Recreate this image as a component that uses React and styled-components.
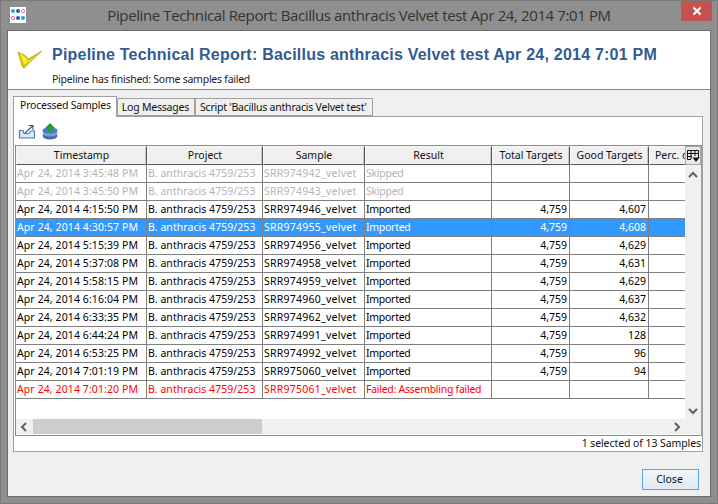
import React from 'react';
import styled, { createGlobalStyle } from 'styled-components';

const Global = createGlobalStyle`
  html, body { margin: 0; padding: 0; background: #8f8f8f; }
  * { box-sizing: border-box; }
`;
const uiFont = `"Noto Sans", "DejaVu Sans", sans-serif`;
const COLS = '131px 116px 102px 127px 78px 79px 88px';

const Window = styled.div`
  width: 718px; height: 504px; background: #8f8f8f; overflow: hidden;
  display: flex; flex-direction: column; font-family: ${uiFont};
  border: 1px solid #7a7a7a;
`;
const TitleBar = styled.div`
  height: 29px; flex: none; display: flex; align-items: flex-start; justify-content: space-between;
  padding-left: 9px;
`;
const AppIcon = styled.svg`width: 16px; height: 16px; margin-top: 6px; flex: none;`;
const TitleText = styled.div`
  flex: 1; text-align: center; font-size: 15px; line-height: 29px; color: #333; white-space: nowrap;
  font-family: "Open Sans", sans-serif; letter-spacing: -0.39px; padding-left: 11px;
`;
const CloseBox = styled.div`
  width: 31px; height: 20px; margin-right: 5px; background: #c75050; flex: none;
  display: flex; align-items: center; justify-content: center;
`;
const Client = styled.div`
  flex: 1; margin: 0 6px 6px 6px; background: #f0f0f0; border: 1px solid #6d6d6d;
  display: flex; flex-direction: column; min-height: 0;
`;
const Banner = styled.div`
  height: 59px; flex: none; background: #fff; border-bottom: 1px solid #8a8a8a;
  display: flex; padding: 0 0 0 9px;
`;
const CheckIcon = styled.svg`width: 26px; height: 24px; margin-top: 18px; flex: none;`;
const BannerText = styled.div`margin-left: 9px; padding-top: 14px;`;
const BannerTitle = styled.div`
  font: bold 16px/20px "Liberation Sans", Arial, sans-serif; color: #335b8f; letter-spacing: 0.22px; white-space: nowrap;
`;
const BannerSub = styled.div`font-size: 10.5px; line-height: 14px; margin-top: 7px; color: #222; white-space: nowrap; letter-spacing: -0.25px;`;
const Body = styled.div`flex: 1; display: flex; flex-direction: column; padding: 6px 7px 0 5px; min-height: 0;`;
const Tabs = styled.div`display: flex; align-items: flex-end; height: 20px; flex: none;`;
const Tab = styled.div`
  font-size: 10.5px; white-space: nowrap; color: #111; letter-spacing: -0.22px;
  border: 1px solid #a0a0a0;
  background: ${p => (p.$active ? '#fff' : '#f0f0f0')};
  height: ${p => (p.$active ? '21px' : '18px')};
  line-height: 17px;
  padding: ${p => (p.$active ? '0 5px 0 6px' : '0 5px 0 4px')};
  border-bottom: ${p => (p.$active ? 'none' : '1px solid #a0a0a0')};
  position: relative; z-index: ${p => (p.$active ? 1 : 0)};
  margin-bottom: ${p => (p.$active ? '-1px' : '0')};
`;
const Panel = styled.div`
  width: 690px; height: 336px; flex: none; border: 1px solid #a0a0a0; background: #fff;
  display: flex; flex-direction: column; padding: 0 0 0 1px;
`;
const Toolbar = styled.div`height: 28px; flex: none; display: flex; align-items: flex-start; gap: 5px; padding: 5px 0 0 3px;`;
const ToolIcon = styled.svg`width: 18px; height: 18px; flex: none;`;
const Frame = styled.div`flex: 1; border-top: 1px solid #8a8a8a; display: flex; flex-direction: column; min-height: 0;`;
const FrameInner = styled.div`
  height: 290px; flex: none; display: flex; flex-direction: column;
  border-left: 1px solid #8a8a8a; border-right: 1px solid #a0a0a0; border-bottom: 1px solid #8a8a8a;
`;
const Main = styled.div`height: 273px; flex: none; display: flex; min-height: 0;`;
const Grid = styled.div`flex: 1; overflow: hidden; min-width: 0; background: #fff;`;
const Row = styled.div`
  display: grid; grid-template-columns: ${COLS}; height: 18px; width: 721px;
  background: ${p => (p.$sel ? '#3399ff' : '#fff')};
  color: ${p => (p.$sel ? '#fff' : p.$tone === 'gray' ? '#b4b4b4' : p.$tone === 'red' ? '#ff0000' : '#000')};
`;
const Cell = styled.div`
  font-size: 10.5px; line-height: 17px; padding: 0 1px; border-right: 1px solid #808080; border-bottom: 1px solid #808080;
  white-space: nowrap; overflow: hidden; text-align: ${p => (p.$num ? 'right' : 'left')};
  padding-right: ${p => (p.$num ? '2px' : '1px')};
  letter-spacing: ${p => p.$track || 0}px;
`;
const HeaderRow = styled.div`
  display: grid; grid-template-columns: ${COLS}; height: 19px; width: 721px;
`;
const HeaderCell = styled.div`
  font-size: 10.5px; line-height: 16px; text-align: center; color: #111; white-space: nowrap; overflow: hidden;
  background: #f0f0f0; border: 1px solid #f8f8f8; border-right: 1px solid #555; border-bottom: 1px solid #555;
  box-shadow: inset -1px 0 0 #c8c8c8;
`;
const VBar = styled.div`
  width: 16px; flex: none; background: #f0f0f0; display: flex; flex-direction: column; align-items: center;
`;
const Corner = styled.button`
  width: 16px; height: 19px; padding: 0; border: 1px solid #a8a8a8; background: #e8e8e8; display: flex; align-items: center; justify-content: center; flex: none;
`;
const Arrow = styled.svg`width: 16px; height: 16px; flex: none; display: block;`;
const UpSlot = styled.div`margin-top: 2px;`;
const Spacer = styled.div`flex: 1;`;
const HBar = styled.div`height: 15px; flex: none; background: #f0f0f0; display: flex; align-items: center; padding-right: 16px;`;
const Thumb = styled.div`height: 15px; width: 229px; margin-left: 1px; background: #cdcdcd; flex: none;`;
const Status = styled.div`height: 15px; flex: none; background: #fff; text-align: right; font-size: 10.5px; line-height: 14px; color: #111; white-space: nowrap; letter-spacing: -0.08px; padding-right: 1px;`;
const Footer = styled.div`flex: 1; display: flex; justify-content: flex-end; align-items: flex-start; padding: 17px 4px 0 0;`;
const CloseButton = styled.button`
  width: 57px; height: 21px; padding: 0 2px 0 0; font-family: ${uiFont}; font-size: 10.5px; line-height: 17px; color: #111;
  border: 1px solid #5ba3e6; background: linear-gradient(#f1f5fa, #dfe9f4);
`;

const P = 'B. anthracis 4759/253';
const rows = [
  ['Apr 24, 2014 3:45:48 PM', 'SRR974942_velvet', 'Skipped', '', '', 'gray'],
  ['Apr 24, 2014 3:45:50 PM', 'SRR974943_velvet', 'Skipped', '', '', 'gray'],
  ['Apr 24, 2014 4:15:50 PM', 'SRR974946_velvet', 'Imported', '4,759', '4,607'],
  ['Apr 24, 2014 4:30:57 PM', 'SRR974955_velvet', 'Imported', '4,759', '4,608', 'sel'],
  ['Apr 24, 2014 5:15:39 PM', 'SRR974956_velvet', 'Imported', '4,759', '4,629'],
  ['Apr 24, 2014 5:37:08 PM', 'SRR974958_velvet', 'Imported', '4,759', '4,631'],
  ['Apr 24, 2014 5:58:15 PM', 'SRR974959_velvet', 'Imported', '4,759', '4,629'],
  ['Apr 24, 2014 6:16:04 PM', 'SRR974960_velvet', 'Imported', '4,759', '4,637'],
  ['Apr 24, 2014 6:33:35 PM', 'SRR974962_velvet', 'Imported', '4,759', '4,632'],
  ['Apr 24, 2014 6:44:24 PM', 'SRR974991_velvet', 'Imported', '4,759', '128'],
  ['Apr 24, 2014 6:53:25 PM', 'SRR974992_velvet', 'Imported', '4,759', '96'],
  ['Apr 24, 2014 7:01:19 PM', 'SRR975060_velvet', 'Imported', '4,759', '94'],
  ['Apr 24, 2014 7:01:20 PM', 'SRR975061_velvet', 'Failed: Assembling failed', '', '', 'red'],
];
const chevrons = {
  up: 'M4 10 L8 6 L12 10',
  down: 'M4 6 L8 10 L12 6',
  left: 'M10 4 L6 8 L10 12',
  right: 'M6 4 L10 8 L6 12',
};
const Chevron = ({ dir }) => (
  <Arrow viewBox="0 0 16 16"><path d={chevrons[dir]} fill="none" stroke="#606060" strokeWidth="2" /></Arrow>
);

export default function App() {
  return (
    <Window>
      <Global />
      <TitleBar>
        <AppIcon viewBox="0 0 16 16">
          <rect width="16" height="16" fill="#fff" />
          {[[3, 4, '#18a8e0', 1], [8, 4, '#2a5f9e', 1], [13, 4, '#f060b0', 0], [3, 11, '#f060b0', 0], [8, 11, '#2a5f9e', 1], [13, 11, '#18a8e0', 1]].map(([x, y, c, solid], i) => (
            <circle key={i} cx={x} cy={y} r={solid ? 2 : 1.6} fill={solid ? c : '#fff'} stroke={solid ? 'none' : c} strokeWidth="1" />
          ))}
        </AppIcon>
        <TitleText>Pipeline Technical Report: Bacillus anthracis Velvet test Apr 24, 2014 7:01 PM</TitleText>
        <CloseBox>
          <svg width="10" height="10" viewBox="0 0 10 10"><path d="M1.5 1.5 L8.5 8.5 M8.5 1.5 L1.5 8.5" stroke="#fff" strokeWidth="2" /></svg>
        </CloseBox>
      </TitleBar>
      <Client>
        <Banner>
          <CheckIcon viewBox="0 0 26 24">
            <path d="M1 3 L9 7 L11 10 L25 2 L13 13 L7 19.5 L5 17 Z" fill="#d4cc00" stroke="#9a9420" strokeWidth="0.6" />
            <path d="M3 4.5 L9 9 L11 12 L20 6.5 L11 13 L7 15.5 Z" fill="#f6f030" />
          </CheckIcon>
          <BannerText>
            <BannerTitle>Pipeline Technical Report: Bacillus anthracis Velvet test Apr 24, 2014 7:01 PM</BannerTitle>
            <BannerSub>Pipeline has finished: Some samples failed</BannerSub>
          </BannerText>
        </Banner>
        <Body>
          <Tabs>
            <Tab $active>Processed Samples</Tab>
            <Tab>Log Messages</Tab>
            <Tab>Script 'Bacillus anthracis Velvet test'</Tab>
          </Tabs>
          <Panel>
            <Toolbar>
              <ToolIcon viewBox="0 0 18 18">
                <path d="M1.5 8.5 V16 H16.5 V9 H13 L11 11.5 H6 L5 8.5 Z" fill="#dbe7f3" stroke="#4a7fb5" strokeWidth="1.2" />
                <path d="M7 11 L14.5 4 M10.5 3.5 H15 V8" fill="none" stroke="#2b5d94" strokeWidth="1.1" />
              </ToolIcon>
              <ToolIcon viewBox="0 0 18 18">
                <ellipse cx="9" cy="14" rx="7.5" ry="3.5" fill="#3f6fb5" />
                <ellipse cx="9" cy="11" rx="7.5" ry="3.5" fill="#7c9fd6" />
                <ellipse cx="9" cy="8.5" rx="7.5" ry="3.2" fill="#4f7cc0" />
                <path d="M9 1 L14 6 H11.5 V10 H6.5 V6 H4 Z" fill="#22a02a" />
              </ToolIcon>
            </Toolbar>
            <Frame>
              <FrameInner>
                <Main>
                  <Grid>
                    <HeaderRow>
                      {['Timestamp', 'Project', 'Sample', 'Result', 'Total Targets', 'Good Targets', 'Perc. of Targets'].map(h => (
                        <HeaderCell key={h}>{h}</HeaderCell>
                      ))}
                    </HeaderRow>
                    {rows.map(r => (
                      <Row key={r[0]} $sel={r[5] === 'sel'} $tone={r[5]}>
                        <Cell $track={0.1}>{r[0]}</Cell>
                        <Cell $track={0.05}>{P}</Cell>
                        <Cell $track={0.25}>{r[1]}</Cell>
                        <Cell $track={-0.27}>{r[2]}</Cell>
                        <Cell $num>{r[3]}</Cell>
                        <Cell $num>{r[4]}</Cell>
                        <Cell />
                      </Row>
                    ))}
                  </Grid>
                  <VBar>
                    <Corner aria-label="Columns">
                      <svg width="14" height="14" viewBox="0 0 14 14">
                        <path d="M1.5 1.5 H12.5 V9 M1.5 1.5 V10.5 H5 M1.5 4.5 H12.5 M1.5 7.5 H6 M5 1.5 V10 M9 1.5 V7" fill="none" stroke="#111" />
                        <path d="M6.5 8.5 H13.5 L10 13 Z" fill="#111" />
                      </svg>
                    </Corner>
                    <UpSlot><Chevron dir="up" /></UpSlot>
                    <Spacer />
                    <Chevron dir="down" />
                  </VBar>
                </Main>
                <HBar>
                  <Chevron dir="left" />
                  <Thumb />
                  <Spacer />
                  <Chevron dir="right" />
                </HBar>
              </FrameInner>
              <Status>1 selected of 13 Samples</Status>
            </Frame>
          </Panel>
          <Footer>
            <CloseButton>Close</CloseButton>
          </Footer>
        </Body>
      </Client>
    </Window>
  );
}
